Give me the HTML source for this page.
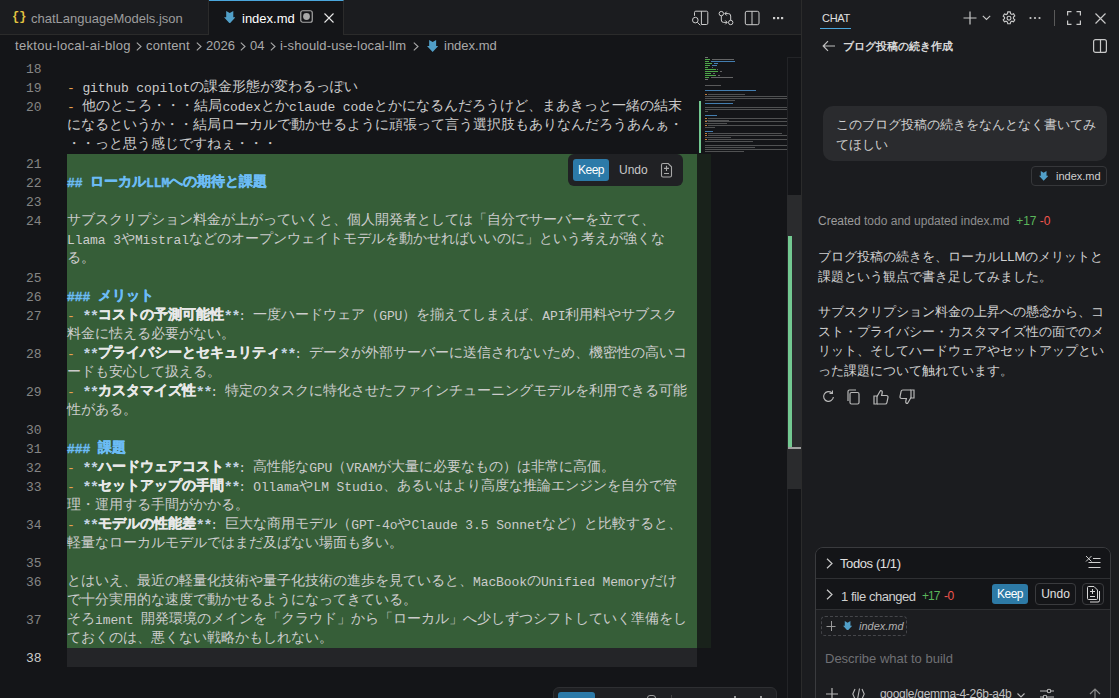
<!DOCTYPE html><html><head><meta charset="utf-8"><style>
*{margin:0;padding:0;box-sizing:border-box}
html,body{width:1119px;height:698px;overflow:hidden;background:#141518}
body{position:relative;font-family:"Liberation Sans",sans-serif;color:#cccccc}
.abs{position:absolute}
i{font-style:normal}
/* tabs */
#tabbar{position:absolute;left:0;top:0;width:801px;height:35px;background:#1b1c1f;border-bottom:1px solid #2b2b2b}
.tab{position:absolute;top:0;height:35px;font-size:13px;line-height:35px}
#tab1{left:0;width:209px;border-right:1px solid #2b2b2b;color:#9d9d9d;height:35px}
#tab2{left:209px;width:135px;background:#141518;border-top:1px solid #4aa6dc;border-right:1px solid #2b2b2b;height:35px;color:#ffffff}
#crumb{position:absolute;left:0;top:35px;height:22px;width:801px;font-size:13px;line-height:22px;color:#a9a9a9}
#crumb span{position:absolute;top:0}
.ln{position:absolute;left:0;width:41.5px;text-align:right;font-family:"Liberation Mono",monospace;font-size:13px;letter-spacing:-0.1px;line-height:19px;height:19px;color:#858585}
.ln.cur{color:#cccccc}
.ln{margin-top:1px}
.row{position:absolute;left:67px;height:19px;line-height:19px;white-space:pre;font-family:"Liberation Mono",monospace;font-size:14px;color:#cccccc}
.row .a{font-size:13px;letter-spacing:-0.1px;position:relative;top:1px}
.row .d{color:#e8a04e}
.row .fc{display:inline-block;width:14px;text-indent:-1px}
.row .s .a{font-size:15px;letter-spacing:-1.3px;top:2px}
.row .h{color:#6cbcf5;font-weight:bold;-webkit-text-stroke:0.35px #6cbcf5}
.row .h .a{font-weight:bold}
.row .s{color:#c5d5e5;font-weight:bold}
.row .b{color:#e8e8e8;font-weight:bold;-webkit-text-stroke:0.3px #e8e8e8}
#green{position:absolute;left:67px;top:154px;width:630px;height:494px;background:#365e38}
#greendark{position:absolute;left:697px;top:154px;width:14px;height:494px;background:#19221b}
#curline{position:absolute;left:67px;top:648px;width:630px;height:19px;background:#242528}
#chat{position:absolute;left:802px;top:0;width:317px;height:698px;background:#1b1c1f}
#sash{position:absolute;left:801px;top:0;width:1px;height:698px;background:#2b2b2b}
</style></head><body>
<div id="tabbar"></div>
<div class="tab" id="tab1"><span class="abs" style="left:12px;top:0;color:#e4c441;font-family:'Liberation Mono';font-size:12px;font-weight:bold;letter-spacing:0px">{}</span><span class="abs" style="left:31px;top:1px">chatLanguageModels.json</span></div>
<div class="tab" id="tab2"><svg class="abs" style="left:14.7px;top:9.7px" width="11.5" height="12.5" viewBox="0 0 11.5 12.5" preserveAspectRatio="none"><path d="M2.2 0L5.75 2.1L9.3 0V6.2H11.5L5.75 12.5L0 6.2H2.2Z" fill="#519fc8"/></svg><span class="abs" style="left:33px;top:0px">index.md</span>
<svg class="abs" style="left:91px;top:9px" width="13" height="13" viewBox="0 0 13 13"><rect x="0.75" y="0.75" width="11.5" height="11.5" rx="2" fill="none" stroke="#a8a8a8" stroke-width="1.2"/><circle cx="6.5" cy="6.5" r="3.4" fill="#a8a8a8"/></svg>
<svg class="abs" style="left:115px;top:11.5px" width="10" height="10" viewBox="0 0 10 10"><path d="M0.5 0.5L9.5 9.5M9.5 0.5L0.5 9.5" stroke="#e8e8e8" stroke-width="1.1"/></svg>
</div>
<div id="crumb">
<span style="left:15px;letter-spacing:0.3px">tektou-local-ai-blog</span>
<svg class="abs" style="left:136.0px;top:7px" width="6" height="9" viewBox="0 0 6 9" fill="none" stroke="#a9a9a9" stroke-width="1.1"><path d="M0.8 0.6L5 4.5L0.8 8.4"/></svg>
<span style="left:146px;letter-spacing:0.15px">content</span>
<svg class="abs" style="left:195.5px;top:7px" width="6" height="9" viewBox="0 0 6 9" fill="none" stroke="#a9a9a9" stroke-width="1.1"><path d="M0.8 0.6L5 4.5L0.8 8.4"/></svg>
<span style="left:206px">2026</span>
<svg class="abs" style="left:239.5px;top:7px" width="6" height="9" viewBox="0 0 6 9" fill="none" stroke="#a9a9a9" stroke-width="1.1"><path d="M0.8 0.6L5 4.5L0.8 8.4"/></svg>
<span style="left:250px">04</span>
<svg class="abs" style="left:270.0px;top:7px" width="6" height="9" viewBox="0 0 6 9" fill="none" stroke="#a9a9a9" stroke-width="1.1"><path d="M0.8 0.6L5 4.5L0.8 8.4"/></svg>
<span style="left:280px;letter-spacing:0.15px">i-should-use-local-llm</span>
<svg class="abs" style="left:412.5px;top:7px" width="6" height="9" viewBox="0 0 6 9" fill="none" stroke="#a9a9a9" stroke-width="1.1"><path d="M0.8 0.6L5 4.5L0.8 8.4"/></svg>
<svg class="abs" style="left:426.6px;top:4.9px" width="11.3" height="12.0" viewBox="0 0 11.5 12.5" preserveAspectRatio="none"><path d="M2.2 0L5.75 2.1L9.3 0V6.2H11.5L5.75 12.5L0 6.2H2.2Z" fill="#519fc8"/></svg>
<span style="left:444px">index.md</span>
</div>
<div id="green"></div>
<div id="greendark"></div>
<div id="curline"></div>
<div class="ln" style="top:59px">18</div>
<div class="ln" style="top:78px">19</div>
<div class="row" style="top:78px"><span class="d"><i class="a">- </i></span><span class="n"><i class="a">github copilot</i>の課金形態が変わるっぽい</span></div>
<div class="ln" style="top:97px">20</div>
<div class="row" style="top:97px"><span class="d"><i class="a">- </i></span><span class="n">他のところ・・・結局<i class="a">codex</i>とか<i class="a">claude code</i>とかになるんだろうけど、まあきっと一緒の結末</span></div>
<div class="row" style="top:116px"><span class="n">になるというか・・結局ローカルで動かせるように頑張って言う選択肢もありなんだろうあんぁ・</span></div>
<div class="row" style="top:135px"><span class="n">・・っと思う感じですねぇ・・・</span></div>
<div class="ln" style="top:154px">21</div>
<div class="ln" style="top:173px">22</div>
<div class="row" style="top:173px"><span class="h"><i class="a">## </i>ローカル<i class="a">LLM</i>への期待と課題</span></div>
<div class="ln" style="top:192px">23</div>
<div class="ln" style="top:211px">24</div>
<div class="row" style="top:211px"><span class="n">サブスクリプション料金が上がっていくと、個人開発者としては「自分でサーバーを立てて、</span></div>
<div class="row" style="top:230px"><span class="n"><i class="a">Llama 3</i>や<i class="a">Mistral</i>などのオープンウェイトモデルを動かせればいいのに」という考えが強くな</span></div>
<div class="row" style="top:249px"><span class="n">る。</span></div>
<div class="ln" style="top:268px">25</div>
<div class="ln" style="top:287px">26</div>
<div class="row" style="top:287px"><span class="h"><i class="a">### </i>メリット</span></div>
<div class="ln" style="top:306px">27</div>
<div class="row" style="top:306px"><span class="d"><i class="a">- </i></span><span class="s"><i class="a">**</i></span><span class="b">コストの予測可能性</span><span class="s"><i class="a">**</i></span><span class="n"><i class="a fc">:</i>一度ハードウェア（<i class="a">GPU</i>）を揃えてしまえば、<i class="a">API</i>利用料やサブスク</span></div>
<div class="row" style="top:325px"><span class="n">料金に怯える必要がない。</span></div>
<div class="ln" style="top:344px">28</div>
<div class="row" style="top:344px"><span class="d"><i class="a">- </i></span><span class="s"><i class="a">**</i></span><span class="b">プライバシーとセキュリティ</span><span class="s"><i class="a">**</i></span><span class="n"><i class="a fc">:</i>データが外部サーバーに送信されないため、機密性の高いコ</span></div>
<div class="row" style="top:363px"><span class="n">ードも安心して扱える。</span></div>
<div class="ln" style="top:382px">29</div>
<div class="row" style="top:382px"><span class="d"><i class="a">- </i></span><span class="s"><i class="a">**</i></span><span class="b">カスタマイズ性</span><span class="s"><i class="a">**</i></span><span class="n"><i class="a fc">:</i>特定のタスクに特化させたファインチューニングモデルを利用できる可能</span></div>
<div class="row" style="top:401px"><span class="n">性がある。</span></div>
<div class="ln" style="top:420px">30</div>
<div class="ln" style="top:439px">31</div>
<div class="row" style="top:439px"><span class="h"><i class="a">### </i>課題</span></div>
<div class="ln" style="top:458px">32</div>
<div class="row" style="top:458px"><span class="d"><i class="a">- </i></span><span class="s"><i class="a">**</i></span><span class="b">ハードウェアコスト</span><span class="s"><i class="a">**</i></span><span class="n"><i class="a fc">:</i>高性能な<i class="a">GPU</i>（<i class="a">VRAM</i>が大量に必要なもの）は非常に高価。</span></div>
<div class="ln" style="top:477px">33</div>
<div class="row" style="top:477px"><span class="d"><i class="a">- </i></span><span class="s"><i class="a">**</i></span><span class="b">セットアップの手間</span><span class="s"><i class="a">**</i></span><span class="n"><i class="a fc">:</i><i class="a">Ollama</i>や<i class="a">LM Studio</i>、あるいはより高度な推論エンジンを自分で管</span></div>
<div class="row" style="top:496px"><span class="n">理・運用する手間がかかる。</span></div>
<div class="ln" style="top:515px">34</div>
<div class="row" style="top:515px"><span class="d"><i class="a">- </i></span><span class="s"><i class="a">**</i></span><span class="b">モデルの性能差</span><span class="s"><i class="a">**</i></span><span class="n"><i class="a fc">:</i>巨大な商用モデル（<i class="a">GPT-4o</i>や<i class="a">Claude 3.5 Sonnet</i>など）と比較すると、</span></div>
<div class="row" style="top:534px"><span class="n">軽量なローカルモデルではまだ及ばない場面も多い。</span></div>
<div class="ln" style="top:553px">35</div>
<div class="ln" style="top:572px">36</div>
<div class="row" style="top:572px"><span class="n">とはいえ、最近の軽量化技術や量子化技術の進歩を見ていると、<i class="a">MacBook</i>の<i class="a">Unified Memory</i>だけ</span></div>
<div class="row" style="top:591px"><span class="n">で十分実用的な速度で動かせるようになってきている。</span></div>
<div class="ln" style="top:610px">37</div>
<div class="row" style="top:610px"><span class="n">そろ<i class="a">iment </i>開発環境のメインを「クラウド」から「ローカル」へ少しずつシフトしていく準備をし</span></div>
<div class="row" style="top:629px"><span class="n">ておくのは、悪くない戦略かもしれない。</span></div>
<div class="ln cur" style="top:648px">38</div>
<div id="sash"></div>
<div id="chat"></div>

<svg class="abs" style="left:680px;top:0" width="120" height="34" viewBox="680 0 120 34" fill="none" stroke="#cccccc" stroke-width="1">
<path d="M694.5 15.8V12.5a1.3 1.3 0 0 1 1.3-1.3H706.5a1.3 1.3 0 0 1 1.3 1.3V23.2a1.3 1.3 0 0 1-1.3 1.3H701.4"/><path d="M701.4 11.2V24.5"/>
<circle cx="695.3" cy="20.1" r="2.8"/><path d="M697.4 22.3L700.3 25.3"/>
<circle cx="721.3" cy="13.6" r="2.2"/><path d="M721.3 15.8V20a2.4 2.4 0 0 0 2.4 2.4H727.2M725.3 20.5L727.2 22.4L725.3 24.3"/>
<circle cx="730.7" cy="22.5" r="2.2"/><path d="M730.7 20.3V16a2.4 2.4 0 0 0-2.4-2.4H724.8M726.7 11.7L724.8 13.6L726.7 15.5"/>
<rect x="745.3" y="11.3" width="13.7" height="13.4" rx="1.6"/><path d="M752 11.3V24.7"/>
<g fill="#cccccc" stroke="none"><rect x="773" y="17" width="2.2" height="2.2"/><rect x="777" y="17" width="2.2" height="2.2"/><rect x="781" y="17" width="2.2" height="2.2"/></g>
</svg>

<div class="abs" style="left:705.0px;top:57.0px;width:3.0px;height:1.0px;background:#707070;opacity:0.9900000000000001"></div>
<div class="abs" style="left:705.0px;top:59.0px;width:5.0px;height:1.0px;background:#4fa84a;opacity:0.9900000000000001"></div>
<div class="abs" style="left:712.0px;top:59.0px;width:22.0px;height:1.0px;background:#707070;opacity:0.8800000000000001"></div>
<div class="abs" style="left:705.0px;top:61.0px;width:4.0px;height:1.0px;background:#4fa84a;opacity:0.9900000000000001"></div>
<div class="abs" style="left:711.0px;top:61.0px;width:24.0px;height:1.0px;background:#4a8cc4;opacity:0.8800000000000001"></div>
<div class="abs" style="left:705.0px;top:63.0px;width:7.0px;height:1.0px;background:#4fa84a;opacity:0.9900000000000001"></div>
<div class="abs" style="left:714.0px;top:63.0px;width:4.0px;height:1.0px;background:#4a8cc4;opacity:0.8800000000000001"></div>
<div class="abs" style="left:705.0px;top:65.0px;width:5.0px;height:1.0px;background:#4fa84a;opacity:0.9900000000000001"></div>
<div class="abs" style="left:712.0px;top:65.0px;width:5.0px;height:1.0px;background:#4a8cc4;opacity:0.8800000000000001"></div>
<div class="abs" style="left:705.0px;top:67.0px;width:3.0px;height:1.0px;background:#4fa84a;opacity:0.9900000000000001"></div>
<div class="abs" style="left:712.0px;top:67.0px;width:1.0px;height:1.0px;background:#707070;opacity:0.8800000000000001"></div>
<div class="abs" style="left:705.0px;top:69.0px;width:11.0px;height:1.0px;background:#4fa84a;opacity:0.9900000000000001"></div>
<div class="abs" style="left:717.0px;top:69.0px;width:1.0px;height:1.0px;background:#707070;opacity:0.8800000000000001"></div>
<div class="abs" style="left:705.0px;top:71.0px;width:13.0px;height:1.0px;background:#4fa84a;opacity:0.9900000000000001"></div>
<div class="abs" style="left:720.0px;top:71.0px;width:2.0px;height:1.0px;background:#707070;opacity:0.8800000000000001"></div>
<div class="abs" style="left:705.0px;top:73.0px;width:6.0px;height:1.0px;background:#4fa84a;opacity:0.9900000000000001"></div>
<div class="abs" style="left:713.0px;top:73.0px;width:2.0px;height:1.0px;background:#707070;opacity:0.8800000000000001"></div>
<div class="abs" style="left:705.0px;top:75.0px;width:11.0px;height:1.0px;background:#4fa84a;opacity:0.9900000000000001"></div>
<div class="abs" style="left:718.0px;top:75.0px;width:2.0px;height:1.0px;background:#707070;opacity:0.8800000000000001"></div>
<div class="abs" style="left:705.0px;top:77.0px;width:4.0px;height:1.0px;background:#4fa84a;opacity:0.9900000000000001"></div>
<div class="abs" style="left:711.0px;top:77.0px;width:22.0px;height:1.0px;background:#707070;opacity:0.8800000000000001"></div>
<div class="abs" style="left:705.0px;top:79.0px;width:3.0px;height:1.0px;background:#707070;opacity:0.9900000000000001"></div>
<div class="abs" style="left:705.0px;top:85.0px;width:16.0px;height:1.0px;background:#707070;opacity:0.77"></div>
<div class="abs" style="left:705.0px;top:90.0px;width:51.0px;height:1.0px;background:#4a8cc4;opacity:0.8800000000000001"></div>
<div class="abs" style="left:705.0px;top:94.0px;width:2.0px;height:1.0px;background:#c08040;opacity:1"></div>
<div class="abs" style="left:708.0px;top:94.0px;width:37.0px;height:1.0px;background:#707070;opacity:0.66"></div>
<div class="abs" style="left:705.0px;top:96.0px;width:82.0px;height:1.0px;background:#707070;opacity:0.66"></div>
<div class="abs" style="left:705.0px;top:98.0px;width:82.0px;height:1.0px;background:#707070;opacity:0.66"></div>
<div class="abs" style="left:705.0px;top:100.0px;width:30.0px;height:1.0px;background:#707070;opacity:0.66"></div>
<div class="abs" style="left:705.0px;top:103.0px;width:28.0px;height:1.0px;background:#4a8cc4;opacity:0.8800000000000001"></div>
<div class="abs" style="left:705.0px;top:107.0px;width:82.0px;height:1.0px;background:#707070;opacity:0.66"></div>
<div class="abs" style="left:705.0px;top:109.0px;width:82.0px;height:1.0px;background:#707070;opacity:0.66"></div>
<div class="abs" style="left:705.0px;top:111.0px;width:3.0px;height:1.0px;background:#707070;opacity:0.66"></div>
<div class="abs" style="left:705.0px;top:115.0px;width:12.0px;height:1.0px;background:#4a8cc4;opacity:0.8800000000000001"></div>
<div class="abs" style="left:705.0px;top:118.0px;width:2.0px;height:1.0px;background:#c08040;opacity:1"></div>
<div class="abs" style="left:708.0px;top:118.0px;width:79.0px;height:1.0px;background:#707070;opacity:0.66"></div>
<div class="abs" style="left:705.0px;top:121.0px;width:2.0px;height:1.0px;background:#c08040;opacity:1"></div>
<div class="abs" style="left:708.0px;top:121.0px;width:79.0px;height:1.0px;background:#707070;opacity:0.66"></div>
<div class="abs" style="left:705.0px;top:125.0px;width:2.0px;height:1.0px;background:#c08040;opacity:1"></div>
<div class="abs" style="left:708.0px;top:125.0px;width:79.0px;height:1.0px;background:#707070;opacity:0.66"></div>
<div class="abs" style="left:705.0px;top:120.0px;width:24.0px;height:1.0px;background:#707070;opacity:0.66"></div>
<div class="abs" style="left:705.0px;top:123.0px;width:22.0px;height:1.0px;background:#707070;opacity:0.66"></div>
<div class="abs" style="left:705.0px;top:127.0px;width:10.0px;height:1.0px;background:#707070;opacity:0.66"></div>
<div class="abs" style="left:705.0px;top:131.0px;width:8.0px;height:1.0px;background:#4a8cc4;opacity:0.8800000000000001"></div>
<div class="abs" style="left:705.0px;top:133.0px;width:2.0px;height:1.0px;background:#c08040;opacity:1"></div>
<div class="abs" style="left:708.0px;top:133.0px;width:74.0px;height:1.0px;background:#707070;opacity:0.66"></div>
<div class="abs" style="left:705.0px;top:135.0px;width:2.0px;height:1.0px;background:#c08040;opacity:1"></div>
<div class="abs" style="left:708.0px;top:135.0px;width:79.0px;height:1.0px;background:#707070;opacity:0.66"></div>
<div class="abs" style="left:705.0px;top:137.0px;width:26.0px;height:1.0px;background:#707070;opacity:0.66"></div>
<div class="abs" style="left:705.0px;top:139.0px;width:2.0px;height:1.0px;background:#c08040;opacity:1"></div>
<div class="abs" style="left:708.0px;top:139.0px;width:79.0px;height:1.0px;background:#707070;opacity:0.66"></div>
<div class="abs" style="left:705.0px;top:141.0px;width:48.0px;height:1.0px;background:#707070;opacity:0.66"></div>
<div class="abs" style="left:705.0px;top:145.0px;width:82.0px;height:1.0px;background:#707070;opacity:0.66"></div>
<div class="abs" style="left:705.0px;top:147.0px;width:50.0px;height:1.0px;background:#707070;opacity:0.66"></div>
<div class="abs" style="left:705.0px;top:149.0px;width:82.0px;height:1.0px;background:#707070;opacity:0.66"></div>
<div class="abs" style="left:705.0px;top:151.0px;width:39.0px;height:1.0px;background:#707070;opacity:0.66"></div>

<div class="abs" style="left:787px;top:57px;width:14px;height:641px;border-left:1px solid #232427;border-top:1px solid #232427"></div>
<div class="abs" style="left:787px;top:195px;width:14px;height:294px;background:#2a2b2d"></div>
<div class="abs" style="left:788px;top:236px;width:4px;height:211px;background:#73c991"></div>
<div class="abs" style="left:788px;top:447px;width:13px;height:2px;background:#a0a0a0"></div>
<div class="abs" style="left:699px;top:101px;width:2px;height:52px;background:#73c991"></div>


<div class="abs" style="left:568px;top:154px;width:115px;height:32px;background:#202124;border-radius:6px"></div>
<div class="abs" style="left:573px;top:159px;width:36px;height:22px;background:#2c7aa8;border-radius:3px;color:#fff;font-size:12px;line-height:22px;text-align:center;letter-spacing:-0.5px">Keep</div>
<div class="abs" style="left:619px;top:159px;font-size:12px;line-height:22px;color:#c8c8c8">Undo</div>
<svg class="abs" style="left:658px;top:160px" width="18" height="20" viewBox="658 160 18 20" fill="none" stroke="#a8a8a8" stroke-width="1.1"><path d="M661.5 165V175.5a1.5 1.5 0 0 0 1.5 1.5H670a1.5 1.5 0 0 0 1.5-1.5V166.8L668.2 163.5H663a1.5 1.5 0 0 0-1.5 1.5Z"/><path d="M666.5 165.8V171M664 168.4H669M664 173.5H669"/></svg>


<div class="abs" style="left:553px;top:687px;width:224px;height:30px;background:#1f2023;border:1px solid #2e2f32;border-radius:6px"></div>
<div class="abs" style="left:558px;top:692px;width:37px;height:20px;background:#2c7aa8;border-radius:3px"></div>
<div class="abs" style="left:671px;top:695px;width:1px;height:10px;background:#444"></div><div class="abs" style="left:647px;top:695px;width:9px;height:8px;border:1px solid #a0a0a0;border-radius:3px"></div><div class="abs" style="left:734px;top:696px;width:2px;height:2px;background:#9a9a9a"></div><div class="abs" style="left:760px;top:696px;width:2px;height:2px;background:#9a9a9a"></div>


<div class="abs" style="left:822px;top:10px;font-size:11px;line-height:16px;color:#e0e0e0;letter-spacing:-0.3px">CHAT</div>
<div class="abs" style="left:820px;top:28px;width:31px;height:1px;background:#4aa6dc"></div>
<svg class="abs" style="left:963px;top:11px" width="14" height="14" viewBox="0 0 14 14" stroke="#c8c8c8" stroke-width="1.2"><path d="M7 0.5V13.5M0.5 7H13.5"/></svg>
<svg class="abs" style="left:982px;top:15px" width="9" height="6" viewBox="0 0 9 6" fill="none" stroke="#c8c8c8" stroke-width="1.1"><path d="M0.8 0.8L4.5 4.5L8.2 0.8"/></svg>
<svg class="abs" style="left:1002px;top:11px" width="14" height="14" viewBox="0 0 16 16" fill="none" stroke="#c8c8c8" stroke-width="1.3"><path d="M6.6 1h2.8l.4 2 1.5.9 1.9-.7 1.4 2.4-1.5 1.3v1.8l1.5 1.3-1.4 2.4-1.9-.7-1.5.9-.4 2H6.6l-.4-2-1.5-.9-1.9.7-1.4-2.4 1.5-1.3V7.1L1.4 5.8l1.4-2.4 1.9.7 1.5-.9z"/><circle cx="8" cy="8.2" r="2.2"/></svg>
<svg class="abs" style="left:1029px;top:16px" width="12" height="4" viewBox="0 0 12 4" fill="#c8c8c8"><circle cx="1.5" cy="2" r="1.1"/><circle cx="6" cy="2" r="1.1"/><circle cx="10.5" cy="2" r="1.1"/></svg>
<div class="abs" style="left:1054px;top:10px;width:1px;height:16px;background:#5a5a5a"></div>
<svg class="abs" style="left:1067px;top:11px" width="14" height="14" viewBox="0 0 14 14" fill="none" stroke="#c8c8c8" stroke-width="1.2"><path d="M0.6 4.5V0.6H4.5M9.5 0.6H13.4V4.5M13.4 9.5V13.4H9.5M4.5 13.4H0.6V9.5"/></svg>
<svg class="abs" style="left:1095px;top:13px" width="11" height="11" viewBox="0 0 11 11" stroke="#c8c8c8" stroke-width="1.2"><path d="M0.5 0.5L10.5 10.5M10.5 0.5L0.5 10.5"/></svg>

<svg class="abs" style="left:822px;top:40px" width="14" height="12" viewBox="0 0 14 12" fill="none" stroke="#c0c0c0" stroke-width="1.2"><path d="M13 6H1.5M6 1.2L1.2 6L6 10.8"/></svg>
<div class="abs" style="left:843px;top:38px;font-size:11px;line-height:16px;font-weight:bold;color:#d8d8d8">ブログ投稿の続き作成</div>
<svg class="abs" style="left:1093px;top:39px" width="14" height="14" viewBox="0 0 14 14" fill="none" stroke="#c8c8c8" stroke-width="1.2"><rect x="0.6" y="0.6" width="12.8" height="12.8" rx="2"/><path d="M7.5 0.6V13.4"/></svg>

<div class="abs" style="left:823px;top:106px;width:284px;height:55px;background:#2a2b2e;border-radius:10px"></div>
<div class="abs" style="left:836px;top:115px;width:266px;font-size:13px;line-height:19.5px;color:#d0d0d0">このブログ投稿の続きをなんとなく書いてみてほしい</div>
<div class="abs" style="left:1031px;top:166px;width:76px;height:20px;border:1px solid #36373a;border-radius:4px"></div>
<svg class="abs" style="left:1038.6px;top:171.2px" width="9.3" height="9.8" viewBox="0 0 11.5 12.5" preserveAspectRatio="none"><path d="M2.2 0L5.75 2.1L9.3 0V6.2H11.5L5.75 12.5L0 6.2H2.2Z" fill="#519fc8"/></svg>
<div class="abs" style="left:1056px;top:168px;font-size:11px;line-height:16px;color:#d0d0d0">index.md</div>

<div class="abs" style="left:818px;top:213px;font-size:12px;line-height:16px;color:#8f8f8f;white-space:nowrap"><span style="color:#9d9d9d">Created</span> todo and updated index.md &nbsp;<span style="color:#5ab65a">+17</span> <span style="color:#f0564e">-0</span></div>

<div class="abs" style="left:818px;top:247px;width:290px;font-size:13px;line-height:19.5px;color:#d0d0d0">ブログ投稿の続きを、ローカルLLMのメリットと<br>課題という観点で書き足してみました。</div>
<div class="abs" style="left:818px;top:302px;width:290px;font-size:13px;line-height:19.5px;color:#d0d0d0">サブスクリプション料金の上昇への懸念から、コ<br>スト・プライバシー・カスタマイズ性の面でのメ<br>リット、そしてハードウェアやセットアップとい<br>った課題について触れています。</div>

<svg class="abs" style="left:821px;top:389px" width="15" height="15" viewBox="0 0 16 16" fill="none" stroke="#b8b8b8" stroke-width="1.2"><path d="M13.2 8.5A5.2 5.2 0 1 1 11.6 4.2"/><path d="M12.2 1.5V4.6H9.1"/></svg>
<svg class="abs" style="left:846px;top:389px" width="15" height="16" viewBox="0 0 15 16" fill="none" stroke="#b8b8b8" stroke-width="1.2"><rect x="4" y="3.5" width="9" height="11.5" rx="1.5"/><path d="M2 12V2.5A1.5 1.5 0 0 1 3.5 1H10"/></svg>
<svg class="abs" style="left:873px;top:389px" width="16" height="16" viewBox="0 0 16 16" fill="none" stroke="#b8b8b8" stroke-width="1.2"><path d="M1 7H4V15H1Z"/><path d="M4 7.5L7.5 1.5C9 1.5 9.5 2.5 9.2 4L8.6 6.5H13.5A1.5 1.5 0 0 1 15 8.3L13.9 13.6A1.8 1.8 0 0 1 12.1 15H4"/></svg>
<svg class="abs" style="left:899px;top:389px" width="16" height="16" viewBox="0 0 16 16" fill="none" stroke="#b8b8b8" stroke-width="1.2"><path d="M15 9H12V1H15Z"/><path d="M12 8.5L8.5 14.5C7 14.5 6.5 13.5 6.8 12L7.4 9.5H2.5A1.5 1.5 0 0 1 1 7.7L2.1 2.4A1.8 1.8 0 0 1 3.9 1H12"/></svg>

<div class="abs" style="left:815px;top:547px;width:296px;height:170px;border:1px solid #3a3b3e;border-radius:8px;background:#1c1d20;overflow:hidden">
  <div class="abs" style="left:0;top:0;width:294px;height:31px;background:#141518;border-bottom:1px solid #2f3033"></div>
  <div class="abs" style="left:0;top:31px;width:294px;height:31px;background:#141518;border-bottom:1px solid #2f3033"></div>
</div>
<svg class="abs" style="left:826px;top:558px" width="7" height="11" viewBox="0 0 7 11" fill="none" stroke="#c8c8c8" stroke-width="1.2"><path d="M1 0.8L6 5.5L1 10.2"/></svg>
<div class="abs" style="left:840px;top:555px;font-size:13px;line-height:17px;color:#e0e0e0;letter-spacing:-0.4px">Todos (1/1)</div>
<svg class="abs" style="left:1085px;top:555px" width="16" height="14" viewBox="0 0 16 14" fill="none" stroke="#d0d0d0" stroke-width="1"><path d="M1 1L6.5 6.5M6.5 1L1 6.5"/><path d="M8 3.5H15.5M3.5 7.5H15.5M3.5 12.5H15.5"/></svg>
<svg class="abs" style="left:826px;top:589px" width="7" height="11" viewBox="0 0 7 11" fill="none" stroke="#c8c8c8" stroke-width="1.2"><path d="M1 0.8L6 5.5L1 10.2"/></svg>
<div class="abs" style="left:841px;top:588px;font-size:13px;line-height:17px;color:#cfcfcf;white-space:nowrap;letter-spacing:-0.45px">1 file changed</div><div class="abs" style="left:922px;top:588px;font-size:12px;line-height:17px;white-space:nowrap;letter-spacing:-1px;color:#5ab65a">+17</div><div class="abs" style="left:944px;top:588px;font-size:12px;line-height:17px;white-space:nowrap;letter-spacing:-0.5px;color:#f0564e">-0</div>
<div class="abs" style="left:992px;top:584px;width:36px;height:20px;background:#2d7aa6;border-radius:3px;color:#fff;font-size:12px;line-height:20px;text-align:center;letter-spacing:-0.5px">Keep</div>
<div class="abs" style="left:1035px;top:583px;width:41px;height:22px;border:1px solid #3a3b3e;border-radius:4px;color:#e0e0e0;font-size:12px;line-height:20px;text-align:center">Undo</div>
<div class="abs" style="left:1082px;top:583px;width:22px;height:22px;border:1px solid #3a3b3e;border-radius:4px"></div>
<svg class="abs" style="left:1084px;top:584px" width="20" height="20" viewBox="1084 584 20 20" fill="none" stroke="#d8d8d8" stroke-width="1"><path d="M1087.5 587.5a1 1 0 0 1 1-1H1094L1097.5 590V598.5a1 1 0 0 1-1 1H1088.5a1 1 0 0 1-1-1Z"/><path d="M1099.5 591V600.5a1.5 1.5 0 0 1-1.5 1.5H1090"/><path d="M1092.5 589V594M1090 591.5H1095M1090 596.5H1095"/></svg>

<div class="abs" style="left:821px;top:616px;width:86px;height:20px;border:1px dashed #45464a;border-radius:4px"></div>
<svg class="abs" style="left:826px;top:621px" width="10" height="10" viewBox="0 0 10 10" stroke="#9a9a9a" stroke-width="1"><path d="M5.5 0V10M0.5 5.5H9.5"/></svg>
<svg class="abs" style="left:842.8px;top:620.8px" width="9.2" height="9.7" viewBox="0 0 11.5 12.5" preserveAspectRatio="none"><path d="M2.2 0L5.75 2.1L9.3 0V6.2H11.5L5.75 12.5L0 6.2H2.2Z" fill="#519fc8"/></svg>
<div class="abs" style="left:859px;top:618px;font-size:11px;line-height:16px;color:#b0b0b0;font-style:italic">index.md</div>

<div class="abs" style="left:825px;top:650px;font-size:13px;line-height:17px;color:#6f7074">Describe what to build</div>

<svg class="abs" style="left:826px;top:688px" width="12" height="12" viewBox="0 0 12 12" stroke="#b8b8b8" stroke-width="1.2"><path d="M6 0V12M0 6H12"/></svg>
<svg class="abs" style="left:852px;top:688px" width="13" height="12" viewBox="0 0 13 12" fill="none" stroke="#b8b8b8" stroke-width="1.1"><path d="M3 1L0.8 6L3 11M10 1L12.2 6L10 11M7.5 0.5L5.5 11.5"/></svg>
<div class="abs" style="left:880px;top:686px;font-size:12px;line-height:16px;color:#c0c0c0;letter-spacing:-0.3px">google/gemma-4-26b-a4b</div>
<svg class="abs" style="left:1017px;top:693px" width="8" height="5" viewBox="0 0 8 5" fill="none" stroke="#b8b8b8" stroke-width="1.1"><path d="M0.5 0.5L4 4L7.5 0.5"/></svg>
<svg class="abs" style="left:1040px;top:688px" width="14" height="12" viewBox="0 0 14 12" fill="none" stroke="#b8b8b8" stroke-width="1.1"><path d="M0 3H14M0 9H14"/><circle cx="9" cy="3" r="1.8" fill="#1e1f22"/><circle cx="5" cy="9" r="1.8" fill="#1e1f22"/></svg>
<svg class="abs" style="left:1089px;top:688px" width="12" height="12" viewBox="0 0 12 12" fill="none" stroke="#8a8a8a" stroke-width="1.2"><path d="M6 12V1M1 6L6 1L11 6"/></svg>

</body></html>
